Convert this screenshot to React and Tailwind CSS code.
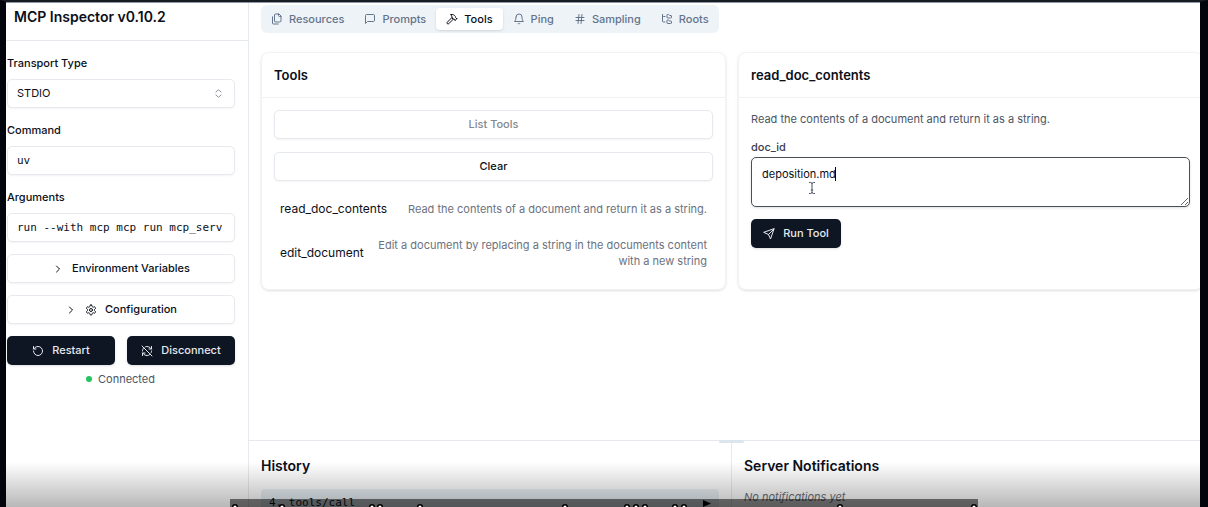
import React from "react";
import { Hammer, Hash, FolderTree, ChevronRight, RotateCcw, RefreshCwOff } from "lucide-react";

function Icon({ children, className = "size-3" }) {
  return (
    <svg
      viewBox="0 0 24 24"
      fill="none"
      stroke="currentColor"
      strokeWidth="2"
      strokeLinecap="round"
      strokeLinejoin="round"
      aria-hidden="true"
      className={"shrink-0 " + className}
    >
      {children}
    </svg>
  );
}

const FilesIcon = () => (
  <Icon>
    <path d="M20 7h-3a2 2 0 0 1-2-2V2" />
    <path d="M9 18a2 2 0 0 1-2-2V4a2 2 0 0 1 2-2h7l4 4v10a2 2 0 0 1-2 2Z" />
    <path d="M3 7.6v12.8A1.6 1.6 0 0 0 4.6 22h9.8" />
  </Icon>
);

const MessageIcon = () => (
  <Icon>
    <path d="M21 15a2 2 0 0 1-2 2H7l-4 4V5a2 2 0 0 1 2-2h14a2 2 0 0 1 2 2z" />
  </Icon>
);

const BellIcon = () => (
  <Icon>
    <path d="M6 8a6 6 0 0 1 12 0c0 7 3 9 3 9H3s3-2 3-9" />
    <path d="M10.3 21a1.94 1.94 0 0 0 3.4 0" />
  </Icon>
);

const SendIcon = () => (
  <Icon>
    <path d="m22 2-7 20-4-9-9-4Z" />
    <path d="M22 2 11 13" />
  </Icon>
);

const GearIcon = () => (
  <Icon>
    <path d="M12.22 2h-.44a2 2 0 0 0-2 2v.18a2 2 0 0 1-1 1.73l-.43.25a2 2 0 0 1-2 0l-.15-.08a2 2 0 0 0-2.73.73l-.22.38a2 2 0 0 0 .73 2.73l.15.1a2 2 0 0 1 1 1.72v.51a2 2 0 0 1-1 1.74l-.15.09a2 2 0 0 0-.73 2.73l.22.38a2 2 0 0 0 2.73.73l.15-.08a2 2 0 0 1 2 0l.43.25a2 2 0 0 1 1 1.73V20a2 2 0 0 0 2 2h.44a2 2 0 0 0 2-2v-.18a2 2 0 0 1 1-1.73l.43-.25a2 2 0 0 1 2 0l.15.08a2 2 0 0 0 2.73-.73l.22-.39a2 2 0 0 0-.73-2.73l-.15-.08a2 2 0 0 1-1-1.74v-.5a2 2 0 0 1 1-1.74l.15-.09a2 2 0 0 0 .73-2.73l-.22-.38a2 2 0 0 0-2.73-.73l-.15.08a2 2 0 0 1-2 0l-.43-.25a2 2 0 0 1-1-1.73V4a2 2 0 0 0-2-2z" />
    <circle cx="12" cy="12" r="3" />
  </Icon>
);

const tabs = [
  { name: "Resources", icon: <FilesIcon /> },
  { name: "Prompts", icon: <MessageIcon /> },
  { name: "Tools", icon: <Hammer size={12} /> },
  { name: "Ping", icon: <BellIcon /> },
  { name: "Sampling", icon: <Hash size={12} /> },
  { name: "Roots", icon: <FolderTree size={12} /> },
];

const outline =
  "flex h-[29px] w-full items-center justify-center rounded-[5px] border border-[#e6eaee] bg-white text-[11px] font-medium shadow-xs";
const solid =
  "flex h-[29px] items-center justify-center gap-2 rounded-[5px] bg-[#0f1623] text-[11px] font-medium text-[#e6e9ee] shadow-sm";
const field =
  "h-[29px] w-full rounded-[5px] border border-[#e6eaee] bg-white px-[9px] text-[11px] shadow-xs outline-none";

function Field({ id, label, children }) {
  return (
    <div className="flex flex-col gap-1.5">
      <label htmlFor={id} className="text-[11px] leading-5 font-medium">
        {label}
      </label>
      {children}
    </div>
  );
}

function Sidebar() {
  return (
    <aside className="flex w-[243px] shrink-0 flex-col border-r border-[#e6eaee]">
      <header className="flex h-[38px] shrink-0 items-center border-b border-[#e6eaee] px-2 pb-2.5">
        <h1 className="text-[14px] leading-5 font-semibold">MCP Inspector v0.10.2</h1>
      </header>
      <div className="flex flex-col gap-3 pt-3 pr-[13px] pl-px">
        <Field id="transport" label="Transport Type">
          <div className="relative">
            <select id="transport" className={field + " appearance-none"}>
              <option>STDIO</option>
            </select>
            <Icon className="pointer-events-none absolute top-2.5 right-3 size-[9px] text-[#6b7280]">
              <path d="m5 8 7-6 7 6M5 16l7 6 7-6" />
            </Icon>
          </div>
        </Field>
        <Field id="command" label="Command">
          <input id="command" defaultValue="uv" className={field + " font-['DejaVu_Sans_Mono',monospace]"} />
        </Field>
        <Field id="arguments" label="Arguments">
          <input
            id="arguments"
            defaultValue="run --with mcp mcp run mcp_serv"
            className={field + " font-['DejaVu_Sans_Mono',monospace]"}
          />
        </Field>
        <button type="button" className={outline + " gap-2"}>
          <ChevronRight size={12} />
          Environment Variables
        </button>
        <button type="button" className={outline + " gap-2"}>
          <ChevronRight size={12} />
          <GearIcon />
          Configuration
        </button>
        <div className="grid grid-cols-2 gap-3">
          <button type="button" className={solid}>
            <RotateCcw size={12} />
            Restart
          </button>
          <button type="button" className={solid}>
            <RefreshCwOff size={12} />
            Disconnect
          </button>
        </div>
      </div>
      <div className="flex items-center justify-center gap-1.5 pt-1 pr-[13px] text-[11px] leading-5 text-[#4b5563]">
        <span className="size-1.5 rounded-full bg-[#22c55e]" />
        Connected
      </div>
    </aside>
  );
}

function Card({ title, children }) {
  return (
    <section className="rounded-lg border border-[#f0f2f4] shadow-sm">
      <header className="flex h-[45px] items-center border-b border-[#eff1f4] px-3">
        <h2 className="text-[13px] leading-5 font-semibold">{title}</h2>
      </header>
      <div className="px-3 pt-3 pb-3.5">{children}</div>
    </section>
  );
}

function ToolRow({ name, description }) {
  return (
    <button type="button" className="flex w-full items-center justify-between p-1.5 text-left">
      <span className="text-[12px] leading-5">{name}</span>
      <span className="pl-3 text-right text-[11px] leading-4 text-[#6b7280]">{description}</span>
    </button>
  );
}

function Workspace() {
  return (
    <div className="h-[437px] shrink-0 px-3 pt-0.5">
      <div role="tablist" className="flex h-[28px] w-fit items-center rounded-md bg-[#eef3f8] text-[#64748b]">
        {tabs.map((tab) => (
          <button
            key={tab.name}
            type="button"
            role="tab"
            aria-selected={tab.name === "Tools"}
            className="flex h-[22px] items-center gap-1.5 rounded px-2.5 text-[11px] font-medium aria-selected:bg-white aria-selected:text-[#0b0f19] aria-selected:shadow-sm"
          >
            {tab.icon}
            {tab.name}
          </button>
        ))}
      </div>
      <div className="-mr-[15px] grid grid-cols-2 gap-3 pt-[19px]">
        <Card title="Tools">
          <div className="flex flex-col gap-[13px]">
            <button type="button" disabled className={outline + " text-[#85888e]"}>
              List Tools
            </button>
            <button type="button" className={outline}>
              Clear
            </button>
          </div>
          <div className="flex flex-col gap-1.5 pt-3">
            <ToolRow
              name="read_doc_contents"
              description="Read the contents of a document and return it as a string."
            />
            <ToolRow
              name="edit_document"
              description="Edit a document by replacing a string in the documents content with a new string"
            />
          </div>
        </Card>
        <Card title="read_doc_contents">
          <p className="text-[11px] leading-[18px] text-[#4b5563]">
            Read the contents of a document and return it as a string.
          </p>
          <label htmlFor="doc-id" className="block pt-[9px] text-[11px] leading-5 font-medium text-[#374151]">
            doc_id
          </label>
          <div className="relative">
            <textarea
              id="doc-id"
              defaultValue="deposition.md"
              className="block h-[50px] w-full rounded-[5px] border border-[#4b5058] bg-white px-2.5 py-2 text-[11px] leading-4 shadow-sm outline-none"
            />
            <span className="absolute top-2.5 left-[84px] h-3.5 w-px bg-black" />
            <svg
              viewBox="0 0 8 12"
              fill="none"
              stroke="#4b5563"
              aria-hidden="true"
              className="absolute top-[25px] left-[57px] h-3 w-2"
            >
              <path d="M1 .5h1.5Q4 .5 4 2Q4 .5 5.500 .5H7M4 2v8M1 11.500h1.500Q4 11.500 4 10q0 1.500 1.500 1.500H7M2.800 8h2.400" />
            </svg>
          </div>
          <button type="button" className={solid + " mt-3 w-[90px]"}>
            <SendIcon />
            Run Tool
          </button>
        </Card>
      </div>
    </div>
  );
}

function History() {
  return (
    <div className="relative grid min-h-0 flex-1 grid-cols-[483px_1fr] border-t border-[#e6eaee]">
      <div className="absolute -top-px left-[470px] h-[3px] w-[25px] rounded-full bg-[#dbe5ec]" />
      <section className="border-r border-[#e6eaee] px-3 pt-[15px]">
        <h2 className="text-[14px] leading-5 font-semibold">History</h2>
        <button
          type="button"
          className="mt-[13px] flex w-full items-center justify-between rounded-t bg-[#e9f0f5] px-2 py-1.5 font-['DejaVu_Sans_Mono',monospace] text-[11px] leading-4"
        >
          <span>4. tools/call</span>
          <svg viewBox="0 0 8 7" aria-hidden="true" className="h-[7px] w-2">
            <path d="M0 0 8 3.500 0 7Z" />
          </svg>
        </button>
      </section>
      <section className="px-3 pt-[15px]">
        <h2 className="text-[14px] leading-5 font-semibold">Server Notifications</h2>
        <p className="pt-[13px] text-[11px] leading-4 text-[#6b7280] italic">No notifications yet</p>
      </section>
    </div>
  );
}

const captionPeaks = [5, 52, 142, 150, 190, 335, 397, 406, 415, 445, 454, 610, 744];

function PlayerShade() {
  return (
    <div className="pointer-events-none absolute inset-x-0 bottom-0 h-[45px] bg-gradient-to-b from-black/0 to-black/28">
      <div className="absolute bottom-0 left-[230px] w-[748px] bg-black/50">
        <svg viewBox="0 0 748 8" aria-hidden="true" className="block h-2 w-full">
          {captionPeaks.map((x) => (
            <circle key={x} cx={x} cy="8" r="2.300" fill="#fff" stroke="#000" strokeWidth="1.500" />
          ))}
        </svg>
      </div>
    </div>
  );
}

export default function App() {
  return (
    <div className="relative flex h-screen overflow-hidden border-t-2 border-r-8 border-l-[6px] border-t-[#171b22] border-r-[#02060c] border-l-[#02060c] bg-white font-['Inter',sans-serif] text-[#0b0f19]">
      <div className="flex min-w-0 flex-1 border-t border-[#8f98a8]">
        <Sidebar />
        <main className="flex min-w-0 flex-1 flex-col overflow-hidden">
          <Workspace />
          <History />
        </main>
      </div>
      <div className="absolute inset-y-0 -right-2 -left-1.5">
        <PlayerShade />
      </div>
    </div>
  );
}
